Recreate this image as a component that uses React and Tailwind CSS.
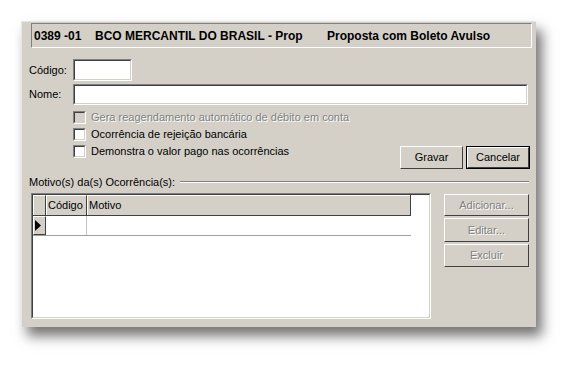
import React from "react";

const sunken = "border border-t-[#808080] border-l-[#808080] border-b-white border-r-white";
const raised = "border border-t-white border-l-white border-b-[#404040] border-r-[#404040]";

function Check({ label, disabled }) {
  return (
    <div className="flex items-center h-[17px]">
      <div className={`w-[13px] h-[13px] ${sunken} ${disabled ? "bg-[#d4d0c8]" : "bg-white"}`}>
        <div className="w-full h-full border border-t-[#404040] border-l-[#404040] border-b-[#d4d0c8] border-r-[#d4d0c8]" />
      </div>
      <span className={`ml-[5px] ${disabled ? "text-[#808080] [text-shadow:1px_1px_0_#fff]" : "text-black"}`}>{label}</span>
    </div>
  );
}

function Btn({ children, disabled, isDefault, className = "" }) {
  return (
    <div className={`${className} ${isDefault ? "border border-black" : ""}`}>
      <div className={`h-full w-full ${raised} bg-[#d4d0c8] flex items-center justify-center ${disabled ? "text-[#808080] [text-shadow:1px_1px_0_#fff]" : "text-black"}`}>
        {children}
      </div>
    </div>
  );
}

export default function App() {
  return (
    <div className="w-[578px] h-[369px] bg-white overflow-hidden pt-[21px] pl-[21px] text-[11px] leading-none" style={{ fontFamily: '"Liberation Sans", Arial, sans-serif' }}>
      <div className="w-[515px] h-[306px] bg-[#d4d0c8] shadow-[6px_9px_12px_rgba(0,0,0,0.55)] border-t border-l border-[#e8e6e0] flex flex-col">
        {/* cabeçalho */}
        <div className={`mt-[1px] ml-[9px] w-[501px] h-[25px] ${sunken} flex items-center font-bold text-[12px] text-black whitespace-nowrap`}>
          <span className="ml-[2px] w-[61px]">0389 -01</span>
          <span className="w-[232px]">BCO MERCANTIL DO BRASIL - Prop</span>
          <span>Proposta com Boleto Avulso</span>
        </div>

        <div className="mt-[11px] flex items-center h-[22px]">
          <span className="w-[51px] pl-[7px]">Código:</span>
          <div className={`w-[59px] h-[22px] bg-white ${sunken}`}>
            <div className="w-full h-full border border-t-[#404040] border-l-[#404040] border-b-[#d4d0c8] border-r-[#d4d0c8]" />
          </div>
        </div>

        <div className="mt-[3px] flex items-center h-[21px]">
          <span className="w-[51px] pl-[7px]">Nome:</span>
          <div className={`w-[455px] h-[21px] bg-white ${sunken}`}>
            <div className="w-full h-full border border-t-[#404040] border-l-[#404040] border-b-[#d4d0c8] border-r-[#d4d0c8]" />
          </div>
        </div>

        <div className="mt-[4px] flex">
          <div className="ml-[51px] flex flex-col">
            <Check label="Gera reagendamento automático de débito em conta" disabled />
            <Check label="Ocorrência de rejeição bancária" />
            <Check label="Demonstra o valor pago nas ocorrências" />
          </div>
          <div className="ml-auto mr-[6px] mt-[37px] flex gap-[3px]">
            <Btn className="w-[63px] h-[23px]">Gravar</Btn>
            <Btn className="w-[64px] h-[23px]" isDefault>Cancelar</Btn>
          </div>
        </div>

        <div className="mt-[7px] flex items-center h-[12px] mr-[7px]">
          <span className="pl-[7px] whitespace-nowrap">Motivo(s) da(s) Ocorrência(s):</span>
          <div className="ml-[5px] flex-1 border-t border-t-[#808080] border-b border-b-white" />
        </div>

        <div className="mt-[5px] flex">
          <div className={`ml-[9px] w-[400px] h-[126px] ${sunken} bg-white`}>
            <div className="w-full h-full border border-t-[#404040] border-l-[#404040] border-b-[#d4d0c8] border-r-[#d4d0c8] bg-white">
              <div className="w-[378px]">
                <div className="flex h-[21px] bg-[#d4d0c8] border-b border-b-[#404040] border-r border-r-[#404040]">
                  <div className="w-[13px] border-r border-r-[#404040] border-t border-t-white border-l border-l-white" />
                  <div className="w-[41px] border-r border-r-[#404040] border-t border-t-white border-l border-l-white flex items-center pl-[1px]">Código</div>
                  <div className="flex-1 border-t border-t-white border-l border-l-white flex items-center pl-[1px]">Motivo</div>
                </div>
                <div className="flex h-[20px] border-b border-b-[#a0a0a0]">
                  <div className={`w-[13px] bg-[#d4d0c8] ${raised} flex items-center`}>
                    <svg width="6" height="11" viewBox="0 0 6 11" className="ml-[1px]">
                      <path d="M0 0 L6 5.5 L0 11 Z" fill="#000" />
                    </svg>
                  </div>
                  <div className="w-[41px] border-r border-r-[#c0c0c0]" />
                  <div className="flex-1" />
                </div>
              </div>
            </div>
          </div>
          <div className="ml-[13px] mt-[1px] flex flex-col gap-[2px]">
            <Btn className="w-[85px] h-[22px]" disabled>Adicionar...</Btn>
            <Btn className="w-[85px] h-[24px]" disabled>Editar...</Btn>
            <Btn className="w-[85px] h-[23px]" disabled>Excluir</Btn>
          </div>
        </div>
      </div>
    </div>
  );
}
